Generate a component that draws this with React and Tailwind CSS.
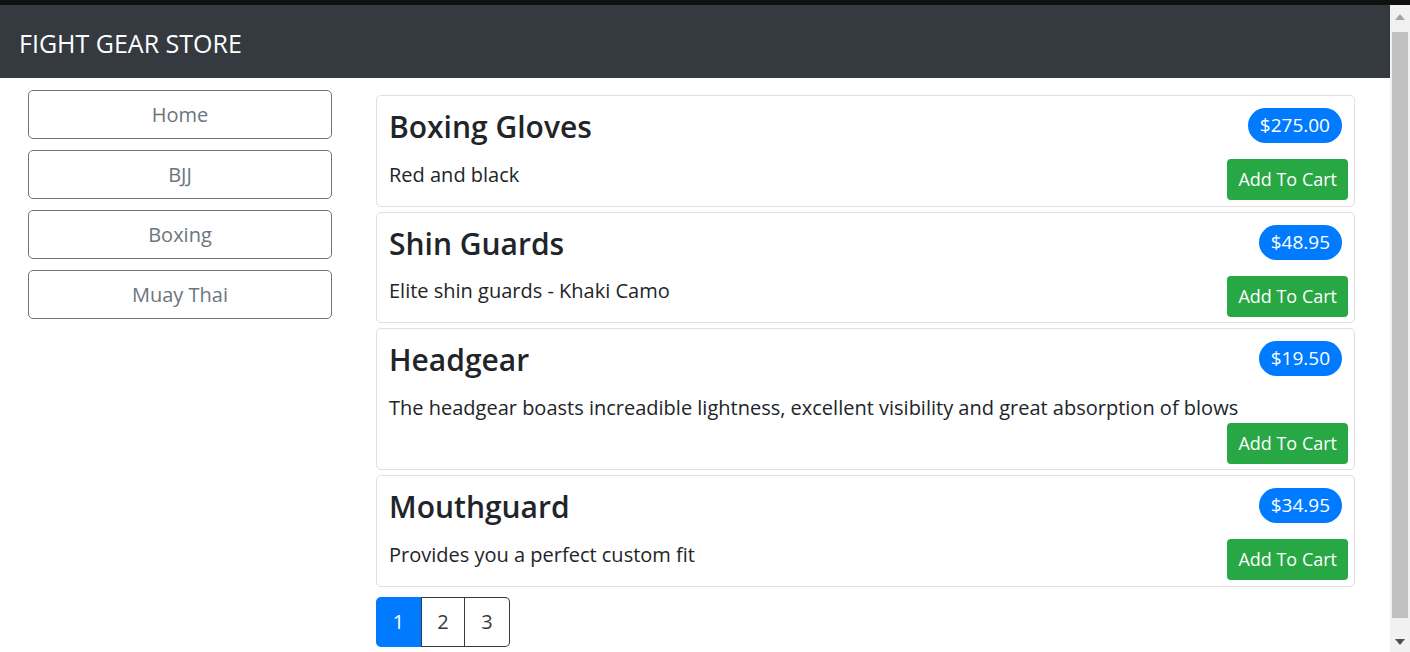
import React from 'react';

const font = { fontFamily: '"Segoe UI", "Open Sans", "Noto Sans", sans-serif' };

const products = [
  { name: 'Boxing Gloves', price: '$275.00', desc: 'Red and black' },
  { name: 'Shin Guards', price: '$48.95', desc: 'Elite shin guards - Khaki Camo' },
  { name: 'Headgear', price: '$19.50', desc: 'The headgear boasts increadible lightness, excellent visibility and great absorption of blows' },
  { name: 'Mouthguard', price: '$34.95', desc: 'Provides you a perfect custom fit' },
];

const categories = ['Home', 'BJJ', 'Boxing', 'Muay Thai'];

function ProductCard({ product }) {
  return (
    <div className="border border-[#dfdfdf] rounded-[5px] px-[12px] pt-[12px] pb-[5.5px]">
      <div className="flex items-start justify-between">
        <h3 className="text-[30px] leading-[38px] font-semibold text-[#212529]">{product.name}</h3>
        <span className="bg-[#007bff] text-white text-[19px] leading-[35px] h-[35px] px-[12px] rounded-full">
          {product.price}
        </span>
      </div>
      <div className="flex flex-wrap items-start justify-between mt-[13px]">
        <p className="text-[20px] leading-[30px] pt-[0.5px] text-[#212529]">{product.desc}</p>
        <button className="ml-auto -mr-[6px] bg-[#28a745] text-white text-[18px] h-[41px] px-[11px] rounded-[4px]">
          Add To Cart
        </button>
      </div>
    </div>
  );
}

export default function App() {
  return (
    <div className="flex w-[1410px] h-[652px] overflow-hidden bg-white" style={font}>
      <div className="flex-1 flex flex-col">
        <div className="h-[5px] bg-[#0f1010]" />
        {/* navbar */}
        <nav className="h-[73px] bg-[#343a40] flex items-center px-[19px] pt-[4px]">
          <span className="text-white text-[25px]">FIGHT GEAR STORE</span>
        </nav>
        <div className="flex">
          {/* categories */}
          <div className="w-[304px] ml-[28px] mt-[12px] flex flex-col gap-[11px]">
            {categories.map((c) => (
              <button
                key={c}
                className="h-[49px] border border-[#6c757d] rounded-[5px] text-[#6c757d] text-[20px]"
              >
                {c}
              </button>
            ))}
          </div>
          {/* products */}
          <div className="ml-[44px] w-[979px] mt-[17px]">
            <div className="flex flex-col gap-[5px]">
              {products.map((p) => (
                <ProductCard key={p.name} product={p} />
              ))}
            </div>
            <div className="flex mt-[10px]">
              <button className="w-[45px] h-[50px] bg-[#007bff] text-white text-[20px] rounded-l-[5px]">1</button>
              <button className="w-[44px] h-[50px] border border-[#343a40] text-[#343a40] text-[20px]">2</button>
              <button className="w-[45px] h-[50px] border border-l-0 border-[#343a40] text-[#343a40] text-[20px] rounded-r-[5px]">3</button>
            </div>
          </div>
        </div>
      </div>
      {/* scrollbar */}
      <div className="w-[20px] flex flex-col bg-[#f1f1f1]">
        <div className="h-[5px] bg-[#0f1010]" />
        <div className="h-[23px] flex items-center justify-center">
          <svg width="10" height="6" viewBox="0 0 10 6"><path d="M0 6 L5 0 L10 6 Z" fill="#a3a3a3" /></svg>
        </div>
        <div className="flex-1 mx-[2px] mt-[4px] mb-[14px] bg-[#c1c1c1]" />
        <div className="h-[20px] flex items-center justify-center">
          <svg width="10" height="6" viewBox="0 0 10 6"><path d="M0 0 L5 6 L10 0 Z" fill="#505050" /></svg>
        </div>
      </div>
    </div>
  );
}
